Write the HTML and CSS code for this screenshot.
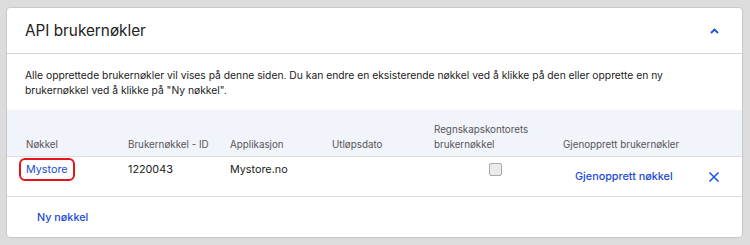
FILE: index.html
```html
<!DOCTYPE html>
<html lang="no">
<head>
    <meta charset="UTF-8">
    <meta name="viewport" content="width=device-width, initial-scale=1.0">
    <title>API brukernøkler</title>
    <link rel="stylesheet" href="styles.css">
</head>
<body>
    <div class="card">
        <div class="card-head">
            <h2>API brukernøkler</h2>
            <button class="toggle" aria-label="Skjul">
                <svg width="9" height="6" viewBox="0 0 9 6"><path d="M1 5 L4.5 1.5 L8 5" fill="none" stroke="#1a4fe0" stroke-width="1.8"/></svg>
            </button>
        </div>

        <p class="card-desc">Alle opprettede brukernøkler vil vises på denne siden. Du kan endre en eksisterende nøkkel ved å klikke på den eller opprette en ny brukernøkkel ved å klikke på "Ny nøkkel".</p>

        <!-- Tabell -->
        <div class="keys">
            <div class="keys-row keys-head">
                <div>Nøkkel</div>
                <div>Brukernøkkel - ID</div>
                <div>Applikasjon</div>
                <div>Utløpsdato</div>
                <div>Regnskapskontorets<br>brukernøkkel</div>
                <div>Gjenopprett brukernøkler</div>
                <div></div>
            </div>
            <div class="keys-row keys-item">
                <div class="cell-top"><a href="#" class="key-link">Mystore</a></div>
                <div class="cell-top">1220043</div>
                <div class="cell-top">Mystore.no</div>
                <div class="cell-top"></div>
                <div class="cell-top"><span class="check"></span></div>
                <div class="cell-mid"><a href="#" class="restore">Gjenopprett nøkkel</a></div>
                <div class="cell-mid">
                    <svg class="remove" width="12" height="12" viewBox="0 0 12 12"><path d="M1.5 1.5 L10.5 10.5 M10.5 1.5 L1.5 10.5" fill="none" stroke="#1a4fe0" stroke-width="1.5"/></svg>
                </div>
            </div>
        </div>

        <div class="card-foot">
            <a href="#" class="new-key">Ny nøkkel</a>
        </div>
    </div>
</body>
</html>
```

FILE: styles.css
```css
body {
    margin: 0;
    background: #dcdcdc;
    font-family: 'Inter', 'Noto Sans', sans-serif;
    color: #222;
}

.card {
    margin: 7px 7px 0 6px;
    height: 229px;
    background: #fff;
    border: 1px solid #c8c8c8;
    border-radius: 4px;
}

.card-head {
    height: 45px;
    padding: 0 23px 0 18px;
    display: flex;
    justify-content: space-between;
    align-items: center;
    border-bottom: 1px solid #d5d5d5;
}

.card-head h2 {
    margin: 0;
    font-size: 15.3px;
    font-weight: 400;
    color: #222;
}

.toggle {
    border: none;
    background: none;
    padding: 0;
    display: flex;
    cursor: pointer;
}

.card-desc {
    margin: 0;
    padding: 14px 18px 12px;
    font-size: 10.3px;
    line-height: 15px;
}

/* Tabell */
.keys-row {
    display: grid;
    grid-template-columns: 102px 102px 102px 102px 129px 138px 1fr;
    padding-left: 19px;
    border-bottom: 1px solid #dedede;
}

.keys-head {
    height: 42px;
    padding-bottom: 4px;
    align-items: end;
    background: #f2f4fb;
    font-size: 9.8px;
    line-height: 15px;
    color: #555;
}

.keys-item {
    height: 39px;
    font-size: 10.8px;
    line-height: 15px;
}

.cell-top {
    padding-top: 5px;
}

.cell-mid {
    align-self: center;
}

.key-link {
    display: inline-block;
    margin: -4px 0 0 -7px;
    padding: 2px 5px 2px;
    border: 2px solid #e8121b;
    border-radius: 6px;
    color: #1c4ad8;
    text-decoration: none;
}

.check {
    display: block;
    width: 11px;
    height: 11px;
    margin: 1px 0 0 55px;
    background: #e9e9ee;
    border: 1px solid #a9a9a9;
    border-radius: 2px;
}

.restore {
    padding-left: 12px;
    color: #1c4ad8;
    text-decoration: none;
    font-weight: 500;
}

.remove {
    display: block;
    margin-left: 7px;
}

.card-foot {
    height: 40px;
    padding-left: 30px;
    display: flex;
    align-items: center;
}

.new-key {
    font-size: 10.8px;
    font-weight: 500;
    color: #1c4ad8;
    text-decoration: none;
}
```
